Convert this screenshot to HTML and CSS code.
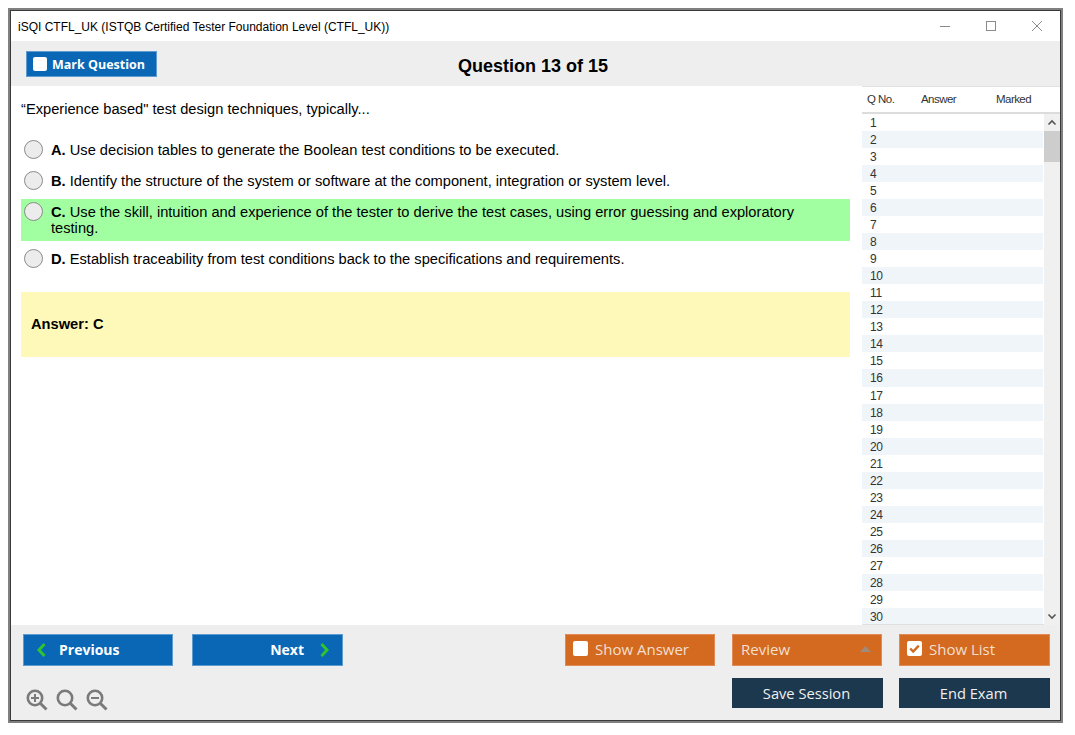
FILE: index.html
```html
<!DOCTYPE html>
<html lang="en">
<head>
<meta charset="utf-8">
<title>iSQI CTFL_UK</title>
<link rel="stylesheet" href="styles.css">
</head>
<body>
<div class="window">
  <div class="window-inner">
    <header class="titlebar">
      <span class="title-text">iSQI CTFL_UK (ISTQB Certified Tester Foundation Level (CTFL_UK))</span>
      <div class="win-controls">
        <svg class="win-icon" width="12" height="12" viewBox="0 0 12 12"><path d="M1 6.5H11" stroke="#8a8a8a" fill="none"/></svg>
        <svg class="win-icon" width="12" height="12" viewBox="0 0 12 12"><rect x="1.5" y="1.5" width="9" height="9" stroke="#8a8a8a" fill="none"/></svg>
        <svg class="win-icon" width="12" height="12" viewBox="0 0 12 12"><path d="M1 1L11 11M11 1L1 11" stroke="#8a8a8a" fill="none"/></svg>
      </div>
    </header>
    <div class="toolbar">
      <div class="toolbar-left">
        <button class="btn btn-mark"><span class="check"></span>Mark Question</button>
      </div>
      <h1 class="q-title">Question 13 of 15</h1>
      <div></div>
    </div>
    <div class="body">
      <main class="question">
        <p class="stem">“Experience based" test design techniques, typically...</p>
        <div class="options">
          <div class="option"><span class="radio"></span><div class="opt-text"><b>A.</b> Use decision tables to generate the Boolean test conditions to be executed.</div></div>
          <div class="option"><span class="radio"></span><div class="opt-text"><b>B.</b> Identify the structure of the system or software at the component, integration or system level.</div></div>
          <div class="option correct"><span class="radio"></span><div class="opt-text"><b>C.</b> Use the skill, intuition and experience of the tester to derive the test cases, using error guessing and exploratory testing.</div></div>
          <div class="option"><span class="radio"></span><div class="opt-text"><b>D.</b> Establish traceability from test conditions back to the specifications and requirements.</div></div>
        </div>
        <div class="answer">Answer: C</div>
      </main>
      <aside class="sidebar">
        <div class="list-head"><span>Q No.</span><span>Answer</span><span>Marked</span></div>
        <div class="list-wrap">
          <ol class="rows" id="rows">
            <li>1</li><li>2</li><li>3</li><li>4</li><li>5</li><li>6</li><li>7</li><li>8</li><li>9</li><li>10</li>
            <li>11</li><li>12</li><li>13</li><li>14</li><li>15</li><li>16</li><li>17</li><li>18</li><li>19</li><li>20</li>
            <li>21</li><li>22</li><li>23</li><li>24</li><li>25</li><li>26</li><li>27</li><li>28</li><li>29</li><li>30</li>
          </ol>
          <div class="scrollbar">
            <svg class="arrow" width="16" height="17" viewBox="0 0 16 17"><path d="M4.5 10.5L8 7L11.5 10.5" stroke="#555" stroke-width="1.6" fill="none"/></svg>
            <div class="thumb"></div>
            <div class="track"></div>
            <svg class="arrow" width="16" height="17" viewBox="0 0 16 17"><path d="M4.5 6.5L8 10L11.5 6.5" stroke="#555" stroke-width="1.6" fill="none"/></svg>
          </div>
        </div>
      </aside>
    </div>
    <footer class="footer">
      <div class="foot-row">
        <div class="group group-nav">
          <button class="btn btn-blue btn-prev"><svg width="11" height="16" viewBox="0 0 11 16"><path d="M8.5 2L3 8L8.5 14" stroke="#2fc42f" stroke-width="3" fill="none"/></svg>Previous</button>
          <button class="btn btn-blue btn-next">Next<svg width="11" height="16" viewBox="0 0 11 16"><path d="M2.5 2L8 8L2.5 14" stroke="#2fc42f" stroke-width="3" fill="none"/></svg></button>
        </div>
        <div class="group group-act">
          <button class="btn btn-orange"><span class="check"></span>Show Answer</button>
          <button class="btn btn-orange btn-review">Review<svg width="11" height="6" viewBox="0 0 11 6"><path d="M5.5 0L11 6H0Z" fill="#a08a7c"/></svg></button>
          <button class="btn btn-orange"><span class="check"><svg width="15" height="15" viewBox="0 0 15 15"><path d="M3.2 7.5L6.2 10.5L11.8 4.6" stroke="#d2691e" stroke-width="2.4" fill="none"/></svg></span>Show List</button>
        </div>
      </div>
      <div class="foot-row foot-row-2">
        <div class="zooms">
          <svg width="22" height="22" viewBox="0 0 22 22"><circle cx="9" cy="9" r="7.2" stroke="#7a7a7a" stroke-width="2.6" fill="none"/><path d="M14.5 14.5L20.5 20.5" stroke="#7a7a7a" stroke-width="3" fill="none"/><path d="M5 9H13M9 5V13" stroke="#7a7a7a" stroke-width="2" fill="none"/></svg>
          <svg width="22" height="22" viewBox="0 0 22 22"><circle cx="9" cy="9" r="7.2" stroke="#7a7a7a" stroke-width="2.6" fill="none"/><path d="M14.5 14.5L20.5 20.5" stroke="#7a7a7a" stroke-width="3" fill="none"/></svg>
          <svg width="22" height="22" viewBox="0 0 22 22"><circle cx="9" cy="9" r="7.2" stroke="#7a7a7a" stroke-width="2.6" fill="none"/><path d="M14.5 14.5L20.5 20.5" stroke="#7a7a7a" stroke-width="3" fill="none"/><path d="M5 9H13" stroke="#7a7a7a" stroke-width="2" fill="none"/></svg>
        </div>
        <div class="group group-end">
          <button class="btn btn-navy">Save Session</button>
          <button class="btn btn-navy">End Exam</button>
        </div>
      </div>
    </footer>
  </div>
</div>
</body>
</html>
```
FILE: styles.css
```css
* { box-sizing: border-box; }
html, body { margin: 0; padding: 0; background: #fff; }
body { padding: 8px 0 0 8px; font-family: "Liberation Sans", Arial, sans-serif; color: #000; }
.window { width: 1055px; height: 715px; border: 2px solid #808080; }
.window-inner { height: 100%; border: 1px solid #3a3a3a; display: flex; flex-direction: column; background: #fff; }

.titlebar { height: 30px; flex: none; display: flex; align-items: center; justify-content: space-between; padding: 2px 0 0 7px; font-size: 12px; background: #fff; }
.win-controls { display: flex; gap: 34px; padding-right: 17px; margin-top: -2px; }
.win-icon { display: block; }

.toolbar { height: 45px; flex: none; background: #eeeeee; display: grid; grid-template-columns: 1fr auto 1fr; align-items: center; padding: 0 20px 0 15px; }
.toolbar-left { display: flex; margin-top: 1px; }
.q-title { margin: 4px 0 0; font-size: 18px; font-weight: 700; line-height: 22px; }

.btn { display: flex; align-items: center; border: 1px solid; font-family: "Open Sans", "Noto Sans", sans-serif; color: #fff; padding: 0; border-radius: 0; }
.check { width: 15px; height: 15px; background: #fff; border-radius: 2px; display: block; flex: none; }
.check svg { display: block; }
.btn-mark { width: 131px; height: 26px; background: #0967b5; border-color: #5e9cd0; font-size: 12.5px; font-weight: 700; padding-left: 6px; gap: 5px; }
.btn-mark .check { width: 14px; height: 14px; }

.body { flex: 1; min-height: 0; display: flex; }
.question { flex: 1; min-width: 0; padding: 0 12px 0 10px; background: #fff; }
.stem { margin: 15px 0 0; font-size: 14.67px; line-height: 16px; }
.options { display: flex; flex-direction: column; gap: 5px; margin-top: 20px; }
.option { display: flex; padding: 5px 12px 5px 3px; gap: 8px; font-size: 14.67px; line-height: 16px; }
.option b { line-height: 14px; }
.option.correct { background: #a1ffa1; }
.radio { width: 19px; height: 19px; flex: none; border-radius: 50%; background: #ececec; border: 1px solid #8a8a8a; margin: -2px 0 -3px; }
.opt-text { min-width: 0; }
.answer { margin-top: 20px; height: 65px; display: flex; align-items: center; padding: 0 0 2px 10px; background: #fff9b9; font-size: 14.67px; font-weight: 700; }

.sidebar { width: 198px; flex: none; display: flex; flex-direction: column; border-top: 1px solid #e2e2e2; background: #fff; }
.list-head { height: 27px; flex: none; display: grid; grid-template-columns: 54px 75px 1fr; align-items: center; padding: 0 0 2px 5px; font-size: 11.5px; letter-spacing: -0.55px; color: #333; border-bottom: 2px solid #dcdcdc; }
.list-wrap { flex: 1; min-height: 0; display: flex; }
.rows { list-style: none; margin: 0; padding: 0; flex: 1; overflow: hidden; border-bottom: 1px solid #e0e0e0; }
.rows li { height: 17.035px; line-height: 19px; padding-left: 8px; font-size: 12px; letter-spacing: -0.3px; color: #333; margin-right: 1px; }
.rows li:nth-child(even) { background: #f0f5fa; }
.scrollbar { width: 16px; flex: none; background: #f0f0f0; display: flex; flex-direction: column; }
.arrow { display: block; flex: none; }
.thumb { height: 31px; background: #cdcdcd; flex: none; }
.track { flex: 1; }

.footer { height: 95px; flex: none; background: #eeeeee; padding: 9px 10px 0 12px; display: flex; flex-direction: column; gap: 12px; }
.foot-row { display: flex; justify-content: space-between; align-items: flex-start; }
.group { display: flex; }
.group-nav { gap: 19px; }
.group-act { display: grid; grid-template-columns: 150px 150px 151px; gap: 17px; }
.group-end { gap: 16px; }
.btn-blue, .btn-orange { height: 32px; }
.btn-blue { font-size: 14px; background: #0967b5; border-color: #5e9cd0; font-weight: 700; padding-bottom: 1px; }
.btn-prev { width: 150px; padding-left: 12px; gap: 12px; }
.btn-next { width: 151px; justify-content: flex-end; padding-right: 12px; gap: 15px; }
.btn-orange { font-size: 15px; background: #d36a20; border-color: #e08a55; color: #f3dfd0; padding: 0 0 3px 7px; gap: 7px; }
.btn-review { justify-content: space-between; padding-left: 8px; padding-right: 10px; }
.btn-navy { width: 151px; height: 30px; background: #1c384f; border-color: #1c384f; justify-content: center; font-size: 14.67px; color: #f0f0f0; padding: 0 2px 1px 0; }
.zooms { display: flex; gap: 8px; padding: 11px 0 0 3px; }
.zooms svg { display: block; }
```
